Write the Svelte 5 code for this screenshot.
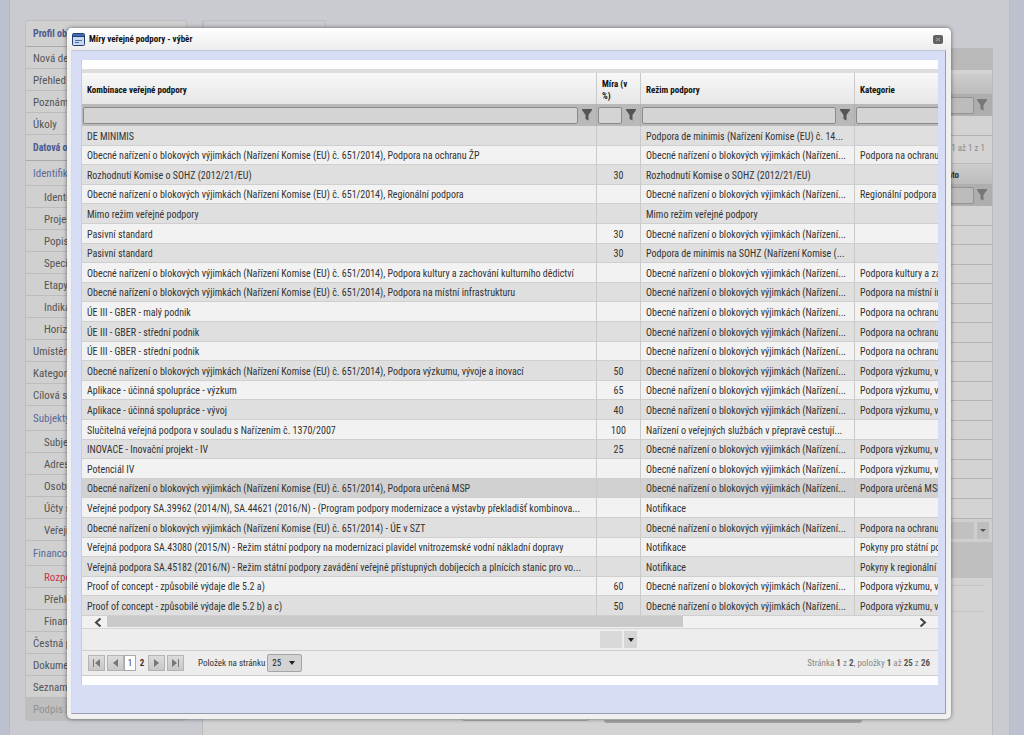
<script>
	const menu = [
		{ label: 'Profil objektu', type: 'header' },
		{ label: 'Nová depeše' },
		{ label: 'Přehled depeší' },
		{ label: 'Poznámky' },
		{ label: 'Úkoly' },
		{ label: 'Datová oblast', type: 'header' },
		{ label: 'Identifikace', type: 'group' },
		{ label: 'Identifikace', type: 'sub' },
		{ label: 'Projekt', type: 'sub' },
		{ label: 'Popis projektu', type: 'sub' },
		{ label: 'Specifické cíle', type: 'sub' },
		{ label: 'Etapy projektu', type: 'sub' },
		{ label: 'Indikátory', type: 'sub' },
		{ label: 'Horizontální', type: 'sub' },
		{ label: 'Umístění' },
		{ label: 'Kategorie' },
		{ label: 'Cílová skupina' },
		{ label: 'Subjekty', type: 'group' },
		{ label: 'Subjekty', type: 'sub' },
		{ label: 'Adresy', type: 'sub' },
		{ label: 'Osoby', type: 'sub' },
		{ label: 'Účty subjektu', type: 'sub' },
		{ label: 'Veřejná', type: 'sub' },
		{ label: 'Financování', type: 'group' },
		{ label: 'Rozpočet', type: 'sub active' },
		{ label: 'Přehled', type: 'sub' },
		{ label: 'Finanční', type: 'sub' },
		{ label: 'Čestná prohlášení' },
		{ label: 'Dokumenty' },
		{ label: 'Seznam' },
		{ label: 'Podpis žádosti', type: 'disabled' }
	];

	const columns = ['Kombinace veřejné podpory', 'Míra (v %)', 'Režim podpory', 'Kategorie'];

	const gber = 'Obecné nařízení o blokových výjimkách (Nařízení Komise (EU) č. 651/2014)';
	const block = 'Obecné nařízení o blokových výjimkách (Nařízení...';
	const env = 'Podpora na ochranu životního prostředí';
	const research = 'Podpora výzkumu, vývoje a inovací';

	const rows = [
		['DE MINIMIS', '', 'Podpora de minimis (Nařízení Komise (EU) č. 14...', ''],
		[gber + ', Podpora na ochranu ŽP', '', block, env],
		['Rozhodnutí Komise o SOHZ (2012/21/EU)', '30', 'Rozhodnutí Komise o SOHZ (2012/21/EU)', ''],
		[gber + ', Regionální podpora', '', block, 'Regionální podpora'],
		['Mimo režim veřejné podpory', '', 'Mimo režim veřejné podpory', ''],
		['Pasivní standard', '30', block, ''],
		['Pasivní standard', '30', 'Podpora de minimis na SOHZ (Nařízení Komise (...', ''],
		[gber + ', Podpora kultury a zachování kulturního dědictví', '', block, 'Podpora kultury a zachování kulturního dědictví'],
		[gber + ', Podpora na místní infrastrukturu', '', block, 'Podpora na místní infrastrukturu'],
		['ÚE III - GBER - malý podnik', '', block, env],
		['ÚE III - GBER - střední podnik', '', block, env],
		['ÚE III - GBER - střední podnik', '', block, env],
		[gber + ', Podpora výzkumu, vývoje a inovací', '50', block, research],
		['Aplikace - účinná spolupráce - výzkum', '65', block, research],
		['Aplikace - účinná spolupráce - vývoj', '40', block, research],
		['Slučitelná veřejná podpora v souladu s Nařízením č. 1370/2007', '100', 'Nařízení o veřejných službách v přepravě cestují...', ''],
		['INOVACE - Inovační projekt - IV', '25', block, research],
		['Potenciál IV', '', block, research],
		[gber + ', Podpora určená MSP', '', block, 'Podpora určená MSP'],
		['Veřejné podpory SA.39962 (2014/N), SA.44621 (2016/N) - (Program podpory modernizace a výstavby překladišť kombinova...', '', 'Notifikace', ''],
		[gber + ' - ÚE v SZT', '', block, env],
		['Veřejná podpora SA.43080 (2015/N) - Režim státní podpory na modernizaci plavidel vnitrozemské vodní nákladní dopravy', '', 'Notifikace', 'Pokyny pro státní podporu'],
		['Veřejná podpora SA.45182 (2016/N) - Režim státní podpory zavádění veřejně přístupných dobíjecích a plnících stanic pro vo...', '', 'Notifikace', 'Pokyny k regionální podpoře'],
		['Proof of concept - způsobilé výdaje dle 5.2 a)', '60', block, research],
		['Proof of concept - způsobilé výdaje dle 5.2 b) a c)', '50', block, research]
	];

	let selected = $state(18);
	let page = $state(1);
	let pageSize = $state('25');
	const backRows = Array(15).fill(0);
</script>

{#snippet funnel()}
	<svg width="10" height="12" viewBox="0 0 10 12" aria-hidden="true"><path d="M0 0h10v1L6.500 6v5.500L3.500 10V6L0 1z" fill="currentColor" /></svg>
{/snippet}

{#snippet arrow(d)}
	<svg width="9" height="8" viewBox="0 0 9 8" aria-hidden="true"><path {d} fill="#777" /></svg>
{/snippet}

<div class="page">
	<div class="site">
		<nav class="sidebar">
			{#each menu as item}
				<a href="#menu" class="item {item.type ?? ''}">{item.label}</a>
			{/each}
		</nav>
		<div class="main">
			<div class="tab"></div>
			<div class="form">
				<div class="bar"></div>
				<div class="gap"></div>
				<div class="back-head"></div>
				<div class="back-filter"><span class="box"></span>{@render funnel()}</div>
				<div class="back-line"></div>
				<div class="back-pager">1 až 1 z 1</div>
				<div class="back-head">Konto</div>
				<div class="back-filter"><span class="box"></span>{@render funnel()}</div>
				{#each backRows as _}
					<div class="back-row"></div>
				{/each}
				<div class="back-line"></div>
				<div class="back-combo"><span class="box"></span><span class="drop"></span></div>
				<div class="block"></div>
				<div class="rule short"></div>
				<div class="rule"></div>
				<div class="actions"><span class="action small"></span><span class="action"></span></div>
			</div>
		</div>
	</div>

	<div class="overlay">
		<div class="dialog" role="dialog" aria-labelledby="title">
			<header class="titlebar">
				<svg width="13" height="13" viewBox="0 0 13 13" aria-hidden="true">
					<rect x=".5" y=".5" width="12" height="12" rx="1" fill="#c9d9f0" stroke="#233f78" />
					<path d="M1 1h11v3H1z" fill="#1f3f80" />
					<path d="M1 2h11" stroke="#6f95d0" />
					<path d="M3 7.500h7M3 9.500h4" stroke="#4b6ea8" />
				</svg>
				<h1 id="title">Míry veřejné podpory - výběr</h1>
				<button class="close" aria-label="Zavřít">
					<svg width="10" height="9" viewBox="0 0 10 9" aria-hidden="true">
						<rect width="10" height="9" rx="2" fill="#626262" />
						<path d="M3 3l4 3M7 3L3 6" stroke="#a4a4a4" />
					</svg>
				</button>
			</header>
			<div class="body">
				<div class="panel">
					<div class="strip"></div>
					<div class="scroller">
						<table>
							<colgroup>
								<col class="c-name" /><col class="c-rate" /><col class="c-mode" /><col class="c-cat" />
							</colgroup>
							<thead>
								<tr>
									{#each columns as column}
										<th>{column}</th>
									{/each}
								</tr>
								<tr class="filters">
									{#each columns as column}
										<td>
											<div class="filter">
												<input type="text" aria-label={column} />
												<button aria-label="Filtr">{@render funnel()}</button>
											</div>
										</td>
									{/each}
								</tr>
							</thead>
							<tbody>
								{#each rows as row, index}
									<tr class:selected={selected === index} onclick={() => (selected = index)}>
										{#each row as cell}
											<td>{cell}</td>
										{/each}
									</tr>
								{/each}
							</tbody>
						</table>
					</div>
					<div class="scrollbar">
						<button aria-label="Posunout vlevo">
							<svg width="8" height="9" viewBox="0 0 8 9"><path d="M6.500 .5L2 4.500l4.500 4" fill="none" stroke="#444" stroke-width="2" /></svg>
						</button>
						<div class="track"><div class="thumb"></div></div>
						<button aria-label="Posunout vpravo">
							<svg width="8" height="9" viewBox="0 0 8 9"><path d="M1.500 .5L6 4.500l-4.500 4" fill="none" stroke="#444" stroke-width="2" /></svg>
						</button>
					</div>
					<div class="summary">
						<input type="text" aria-label="Souhrn" />
						<button aria-label="Vybrat souhrn"><svg width="6" height="4" viewBox="0 0 6 4"><path d="M0 0h6L3 4z" fill="#222" /></svg></button>
					</div>
					<footer class="pager">
						<button class="nav" aria-label="První" onclick={() => (page = 1)}>{@render arrow('M1 0h1v8H1zM8 0v8L3 4z')}</button>
						<button class="nav prev" aria-label="Předchozí" onclick={() => (page = 1)}>{@render arrow('M7 0v8L2 4z')}</button>
						<button class="num" class:current={page === 1} onclick={() => (page = 1)}>1</button>
						<button class="num" class:current={page === 2} onclick={() => (page = 2)}>2</button>
						<button class="nav" aria-label="Další" onclick={() => (page = 2)}>{@render arrow('M2 0v8l5-4z')}</button>
						<button class="nav last" aria-label="Poslední" onclick={() => (page = 2)}>{@render arrow('M1 0v8l5-4zM7 0h1v8H7z')}</button>
						<label for="size">Položek na stránku</label>
						<span class="size">
							<select id="size" bind:value={pageSize}>
								<option>25</option>
								<option>50</option>
							</select>
							<svg width="6" height="4" viewBox="0 0 6 4" aria-hidden="true"><path d="M0 0h6L3 4z" fill="#222" /></svg>
						</span>
						<span class="info">Stránka <b>{page}</b> z <b>2</b>, položky <b>1</b> až <b>25</b> z <b>26</b></span>
					</footer>
				</div>
			</div>
		</div>
	</div>
</div>

<style>
	:global(body) {
		background: #bdc1cf;
	}
	.page,
	.page :is(input, button, select) {
		font-family: 'Roboto Condensed', 'Liberation Sans Narrow', Roboto, sans-serif;
		font-size: 10px;
	}
	.page :is(input, button, select) {
		box-sizing: border-box;
		margin: 0;
		padding: 0;
		border: 0;
		min-width: 0;
	}
	.page {
		position: relative;
		height: 100vh;
		overflow: hidden;
		color: #333;
	}
	svg {
		display: block;
		flex: none;
	}

	/* page behind the dialog */
	.site {
		display: flex;
		gap: 15px;
		box-sizing: border-box;
		height: 100%;
		margin: 0 14px 0 9px;
		padding: 20px 16px 0 15px;
		background: #cacbd0;
		border-right: 1px solid #b9bbc6;
		border-left: 1px solid #b5b8c6;
	}
	.sidebar {
		flex: none;
		width: 160px;
		align-self: flex-start;
		border: 1px solid #bebec1;
		border-radius: 3px;
		background: #d0d0d0;
	}
	.item {
		display: block;
		box-sizing: border-box;
		height: 22px;
		padding-left: 7px;
		border-bottom: 1px solid #bcbcbc;
		overflow: hidden;
		white-space: nowrap;
		font-size: 11px;
		line-height: 23px;
		color: #555;
		text-decoration: none;
	}
	.item.header {
		height: 26px;
		line-height: 25px;
		border-color: #aaa;
		font-size: 10px;
		font-weight: bold;
		color: #4d5c90;
	}
	.item.group {
		height: 25px;
		line-height: 25px;
		color: #5a6a98;
	}
	.item.sub {
		padding-left: 18px;
	}
	.item.active {
		color: #c4384c;
	}
	.item.disabled {
		background: #bebebe;
		color: #929292;
	}
	.main {
		flex: 1;
		display: flex;
		flex-direction: column;
		border-left: 1px solid #b9bac0;
	}
	.tab {
		box-sizing: border-box;
		flex: none;
		width: 123px;
		height: 28px;
		border: 1px solid #bebec1;
		border-radius: 3px;
	}
	.form {
		flex: 1;
		background: #d3d3d3;
		border-right: 1px solid #bbb;
	}
	.bar {
		height: 22px;
		background: #b9b9b9;
	}
	.gap {
		height: 4px;
	}
	.back-head {
		box-sizing: border-box;
		height: 20px;
		padding-right: 33px;
		background: linear-gradient(#cdcdcd, #bcbcbc);
		font-weight: bold;
		font-size: 9px;
		line-height: 23px;
		text-align: right;
	}
	.back-filter {
		display: flex;
		align-items: center;
		justify-content: space-between;
		box-sizing: border-box;
		height: 22px;
		padding: 0 5px 0 2px;
		background: #aeaeae;
		color: #777;
	}
	.back-filter .box {
		flex: 1;
		height: 15px;
		margin-right: 3px;
		border: 1px solid #949494;
		border-radius: 2px;
		background: #bcbcbc;
	}
	.back-line {
		height: 19px;
		border-bottom: 1px solid #b2b2b2;
	}
	.back-pager {
		height: 27px;
		padding-right: 7px;
		font-size: 9px;
		line-height: 25px;
		text-align: right;
		color: #888;
		border-bottom: 1px solid #bbb;
	}
	.back-row {
		box-sizing: border-box;
		height: 20px;
		border-bottom: 1px solid #b4b4b4;
	}
	.back-row:nth-child(even) {
		height: 19px;
	}
	.back-combo {
		display: flex;
		align-items: center;
		gap: 3px;
		height: 23px;
		padding: 0 3px 0 2px;
		background: #cfcfcf;
	}
	.back-combo .box {
		flex: 1;
		height: 17px;
		background: #c1c1c1;
	}
	.drop {
		display: flex;
		align-items: center;
		justify-content: center;
		width: 12px;
		height: 17px;
		background: #bebebe;
	}
	.drop::after {
		content: '';
		border: 3px solid transparent;
		border-top-color: #555;
		border-bottom: 0;
	}
	.block {
		height: 36px;
		background: #bfbfbf;
	}
	.rule {
		height: 25px;
		margin-right: 8px;
		border-bottom: 1px solid #c3c3c3;
	}
	.rule.short {
		height: 7px;
	}
	.actions {
		display: flex;
		gap: 15px;
		padding: 89px 130px 0 259px;
	}
	.action {
		flex: 1;
		height: 19px;
		border-bottom: 3px solid #a5a5a5;
		border-radius: 3px;
	}
	.action.small {
		flex: none;
		width: 127px;
		border-bottom-width: 1px;
	}

	/* dialog */
	.overlay {
		position: absolute;
		inset: 0;
		box-sizing: border-box;
		padding: 28px 73px 16px 67px;
	}
	.dialog {
		display: flex;
		flex-direction: column;
		box-sizing: border-box;
		height: 100%;
		padding: 0 5px 5px 4px;
		border-radius: 5px;
		background: #f0f0f0;
		box-shadow: 0 0 4px rgba(0, 0, 0, 0.5);
	}
	.titlebar {
		display: flex;
		align-items: center;
		gap: 4px;
		flex: none;
		height: 22px;
		margin: 0 -5px 0 -4px;
		padding: 0 8px 0 5px;
		border-radius: 5px 5px 0 0;
		background: linear-gradient(#fff, #ededed);
	}
	.titlebar h1 {
		flex: 1;
		margin: 0;
		font-size: 9px;
		color: #111;
	}
	.close {
		background: none;
	}
	.body {
		flex: 1;
		padding: 9px 7px 0 9px;
		border: 1px solid #9a9dab;
		border-left-color: #d5d9e8;
		border-top-color: #c4c8d6;
		background: #d6ddf5;
	}
	.panel {
		padding: 9px 0;
		background: #fff;
		border-left: 1px solid #ccc;
		overflow: hidden;
	}
	.strip {
		height: 4px;
		background: #ddd;
	}
	.scroller {
		overflow: hidden;
	}
	table {
		width: 1207px;
		table-layout: fixed;
		border-collapse: separate;
		border-spacing: 0;
	}
	.c-name {
		width: 515px;
	}
	.c-rate {
		width: 44px;
	}
	.c-mode {
		width: 214px;
	}
	th,
	td {
		box-sizing: border-box;
		padding: 2px 5px 0;
		border-right: 1px solid #cacaca;
	}
	th {
		height: 31px;
		padding-right: 4px;
		background: linear-gradient(#f8f8f8, #e6e6e6);
		font-size: 9px;
		line-height: 12px;
		text-align: left;
		color: #111;
	}
	.filters td {
		height: 22px;
		padding: 0 4px 0 1px;
		background: #b9b9b9;
		border-color: #b0b0b0;
	}
	.filter {
		display: flex;
		align-items: center;
		gap: 4px;
		color: #555;
	}
	.filter input {
		flex: 1;
		width: 0;
		height: 17px;
		border: 1px solid #8a8a8a;
		border-radius: 2px;
		background: #d4d4d4;
	}
	.filter button {
		background: none;
		color: inherit;
	}
	tbody tr {
		height: 20px;
		background: #dfdfdf;
	}
	tbody tr:nth-child(even) {
		background: #f2f2f2;
	}
	tbody tr:nth-child(5n + 2),
	tbody tr:nth-child(5n + 4) {
		height: 19px;
	}
	tbody tr.selected {
		background: #d1d1d1;
	}
	tbody td {
		border-bottom: 1px solid #cfcfcf;
		overflow: hidden;
		white-space: nowrap;
		line-height: 16px;
	}
	tbody td:nth-child(2) {
		text-align: center;
	}
	.scrollbar {
		display: flex;
		height: 12px;
		background: #f1f1f1;
		border-bottom: 1px solid #d5d5d5;
	}
	.scrollbar button {
		display: flex;
		align-items: center;
		justify-content: center;
		width: 25px;
		padding-left: 6px;
		background: none;
	}
	.scrollbar button:last-child {
		width: 31px;
		padding: 0;
	}
	.track {
		flex: 1;
	}
	.thumb {
		width: 72%;
		height: 11px;
		background: #cacaca;
	}
	.summary {
		display: flex;
		align-items: center;
		gap: 2px;
		height: 21px;
		padding-left: 518px;
		border-bottom: 1px solid #cfcfcf;
		background: #ededed;
	}
	.summary input {
		width: 22px;
		height: 17px;
		background: #d9d9d9;
	}
	.summary button {
		display: flex;
		align-items: center;
		justify-content: center;
		width: 13px;
		height: 17px;
		background: #d6d6d6;
	}
	.pager {
		display: flex;
		align-items: center;
		height: 24px;
		padding: 0 8px 0 6px;
		border-bottom: 1px solid #ccc;
		background: #ededed;
		font-size: 9px;
	}
	.page .pager :is(button, select) {
		font-size: 9px;
	}
	.nav {
		display: flex;
		align-items: center;
		justify-content: center;
		width: 17px;
		height: 16px;
		background: linear-gradient(#dedede, #c6c6c6);
		outline: 1px solid #b4b4b4;
		outline-offset: -1px;
	}
	.nav.prev,
	.nav.last {
		margin-left: 2px;
	}
	.num {
		width: 12px;
		height: 16px;
		background: none;
		font-weight: bold;
		color: #333;
	}
	.num.current {
		background: #fff;
		outline: 1px solid #aaa;
		outline-offset: -1px;
		font-weight: normal;
	}
	.pager label {
		margin: 0 2px 0 14px;
	}
	.size {
		display: grid;
		align-items: center;
	}
	.size > * {
		grid-area: 1 / 1;
	}
	.size svg {
		justify-self: end;
		margin-right: 7px;
		pointer-events: none;
	}
	.page .size select {
		appearance: none;
		width: 35px;
		height: 18px;
		padding-left: 4px;
		border: 1px solid #a5a5a5;
		border-radius: 2px;
		background: #d3d3d3;
		color: #222;
	}
	.info {
		margin-left: auto;
		color: #888;
	}
	.info b {
		color: #555;
	}
</style>
